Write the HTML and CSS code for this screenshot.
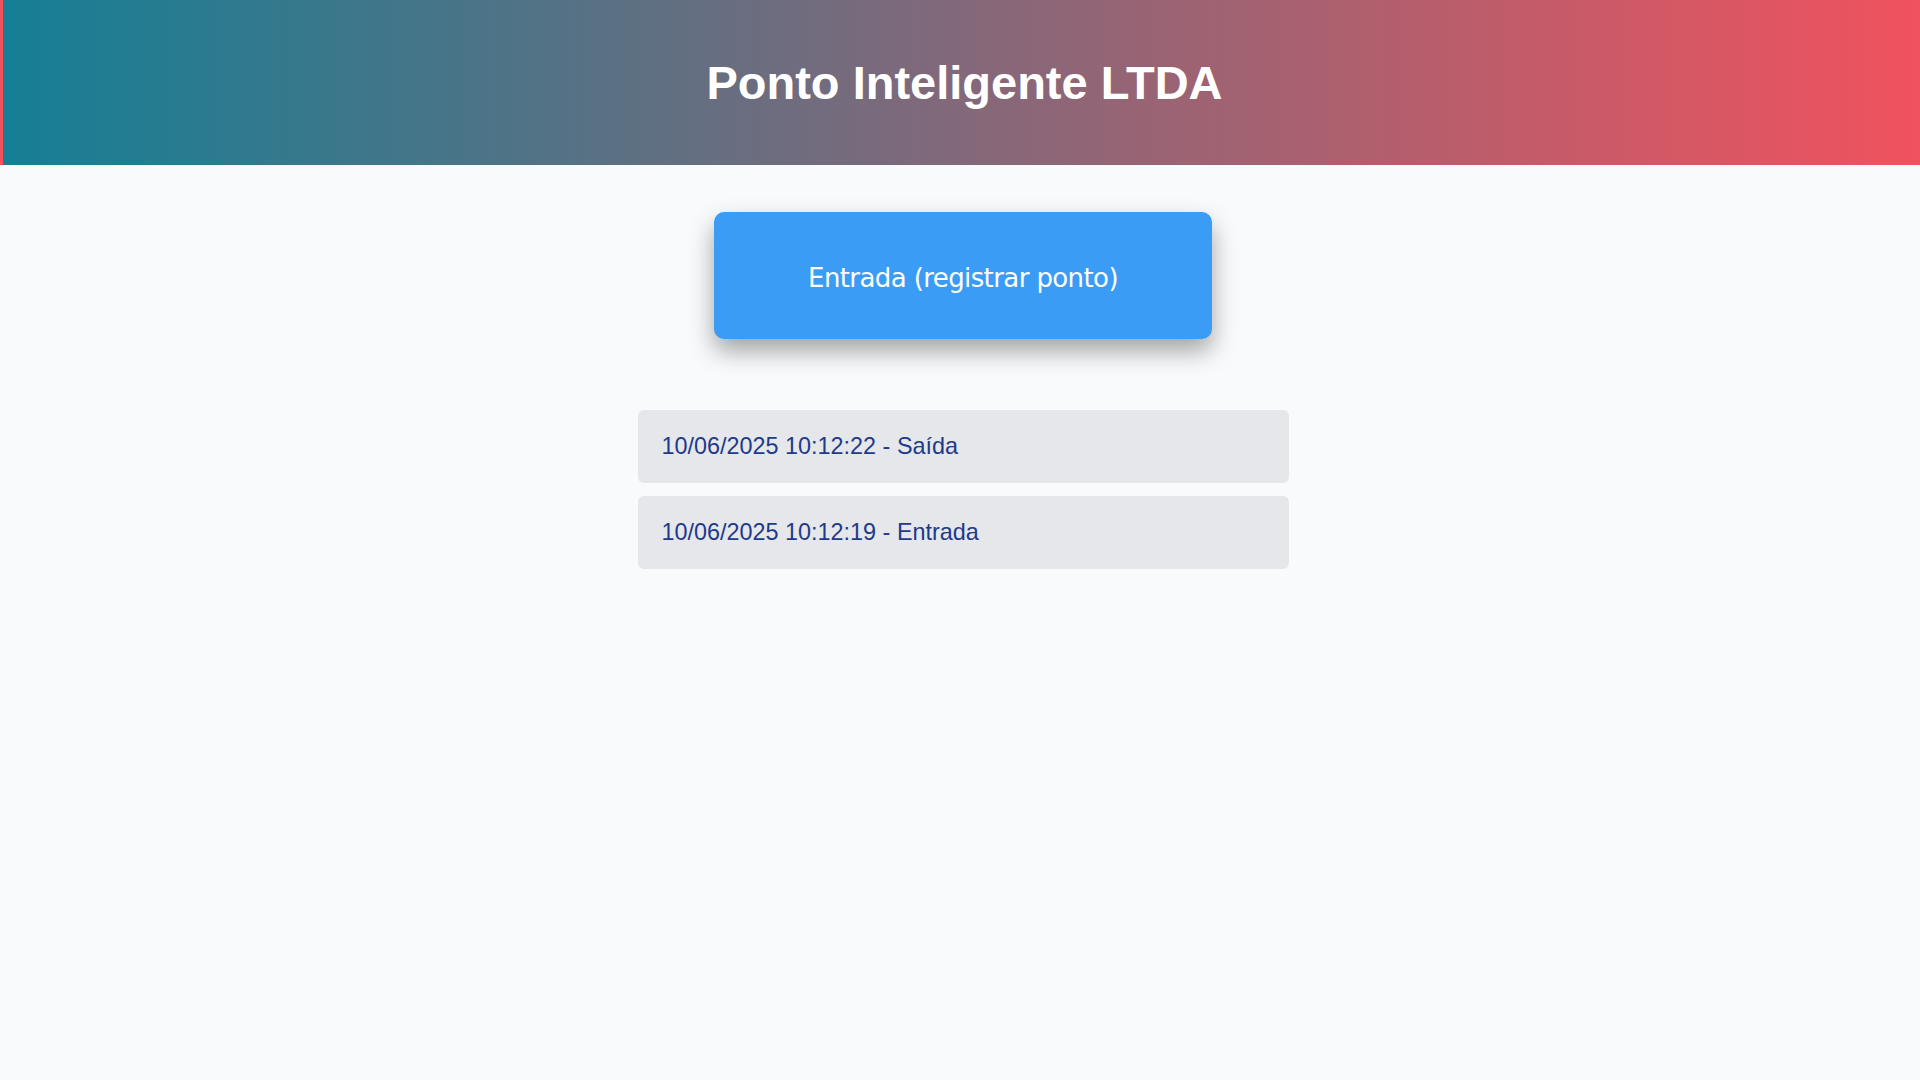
FILE: index.html
```html
<!DOCTYPE html>
<html lang="pt-BR">
<head>
<meta charset="utf-8">
<title>Ponto Inteligente LTDA</title>
<link rel="stylesheet" href="styles.css">
</head>
<body>
<header class="topbar">
  <h1 class="title">Ponto Inteligente LTDA</h1>
</header>
<main class="content">
  <button class="punch-btn" type="button">Entrada (registrar ponto)</button>
  <ul class="records">
    <li class="record">10/06/2025 10:12:22 - Saída</li>
    <li class="record">10/06/2025 10:12:19 - Entrada</li>
  </ul>
</main>
</body>
</html>
```
FILE: styles.css
```css
html, body {
  margin: 0;
  padding: 0;
  background: #f9fafb;
  height: 100%;
}
body {
  font-family: "Liberation Sans", Arial, sans-serif;
}
.topbar {
  height: 165px;
  display: flex;
  align-items: center;
  justify-content: center;
  padding-left: 6px;
  background: linear-gradient(90deg, #157f95 0%, #f0525e 100%);
  border-left: 3px solid #f0525e;
  box-sizing: border-box;
}
.title {
  margin: 0;
  color: #ffffff;
  font-size: 47px;
  font-weight: 700;
  line-height: 1;
}
.content {
  display: flex;
  flex-direction: column;
  align-items: center;
  padding: 47px 0 0 6px;
}
.punch-btn {
  width: 498px;
  height: 127px;
  border: none;
  border-radius: 10px;
  background: #3b9cf5;
  color: #ffffff;
  font-family: "DejaVu Sans", Verdana, sans-serif;
  font-size: 26px;
  letter-spacing: -0.6px;
  padding: 4px 0 0 0;
  box-shadow: 0 12px 24px rgba(0, 0, 0, 0.35);
  cursor: pointer;
}
.records {
  list-style: none;
  margin: 71px 0 0 0;
  padding: 0;
  width: 651px;
  display: flex;
  flex-direction: column;
  gap: 13px;
}
.record {
  height: 73px;
  display: flex;
  align-items: center;
  padding: 0 24px;
  background: #e5e7eb;
  border-radius: 6px;
  color: #1e3a8a;
  font-size: 23.4px;
}
```
